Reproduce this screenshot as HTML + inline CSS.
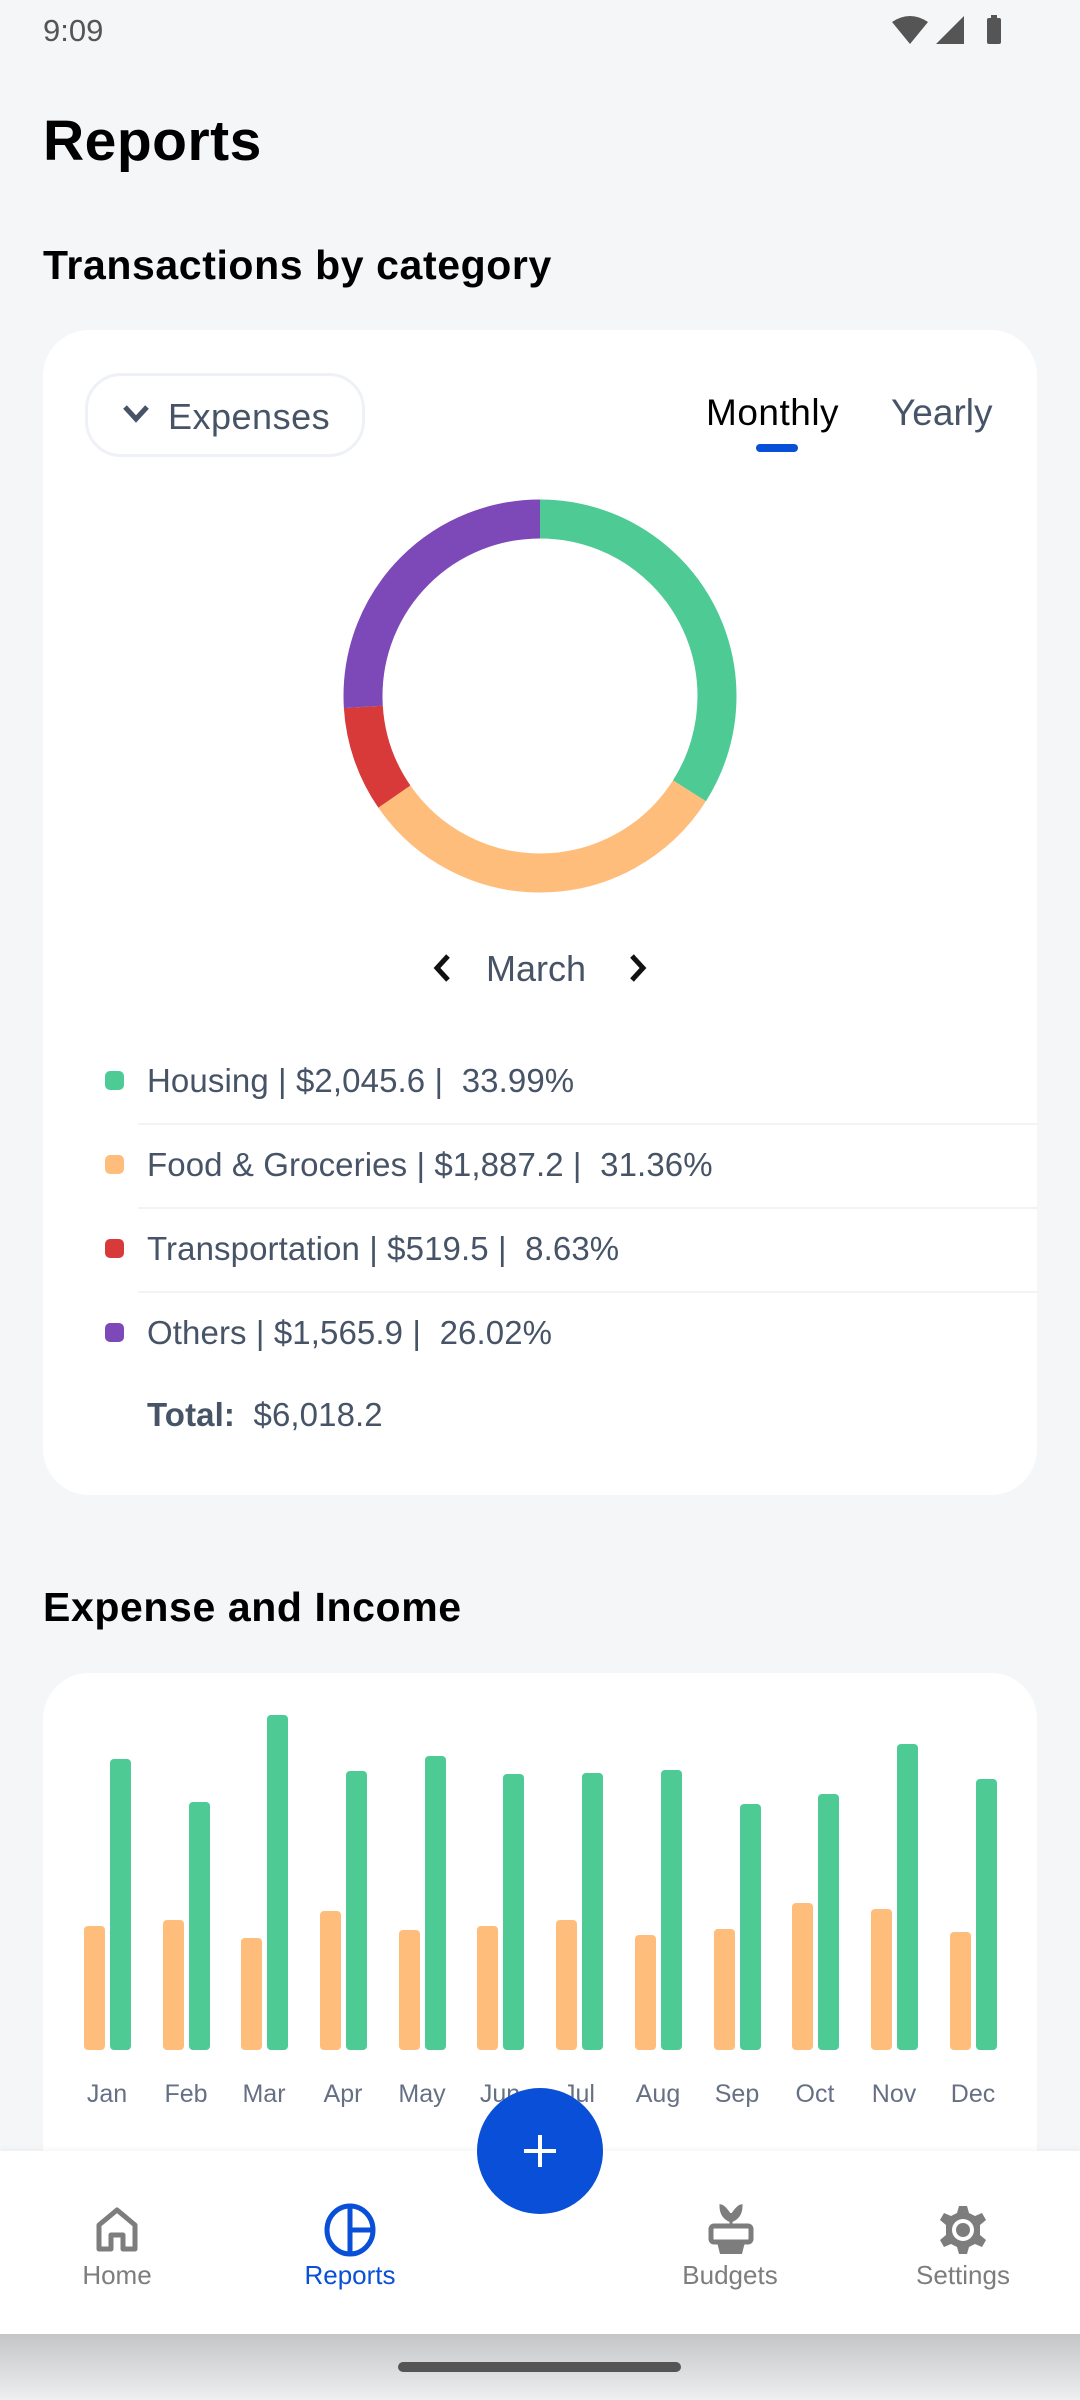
<!DOCTYPE html>
<html><head><meta charset="utf-8"><style>
*{margin:0;padding:0;box-sizing:border-box}
body{width:1080px;height:2400px;background:#f5f6f8;font-family:"Liberation Sans",sans-serif;position:relative;overflow:hidden;color:#475467}
.a{position:absolute}
.t{white-space:nowrap}
.leg{position:absolute;left:147px;font-size:33px;letter-spacing:0.1px;color:#475467;white-space:nowrap;line-height:40px}
.dot{position:absolute;left:105px;width:19px;height:19px;border-radius:5px}
.div{position:absolute;left:138px;right:43px;height:2px;background:#f1f3f6}
.nl{position:absolute;top:2260px;font-size:26px;color:#7d7d7d;width:160px;text-align:center}
.ml{position:absolute;top:2080px;font-size:25px;color:#667085;width:70px;text-align:center}
</style></head><body>
<div class="a t" style="left:43px;top:13px;font-size:31px;color:#555">9:09</div>
<svg class="a" style="left:888px;top:14px" width="124" height="34" viewBox="0 0 124 34">
<path d="M4 8 Q22 -4 40 8 L22 30 Z" fill="#555"/>
<path d="M48 30 L76 2 L76 30 Z" fill="#555"/>
<rect x="99" y="4" width="14" height="26" rx="2" fill="#555"/><rect x="103" y="1" width="6" height="4" fill="#555"/>
</svg>
<div class="a t" style="left:43px;top:108px;font-size:57px;font-weight:bold;color:#000;letter-spacing:0.5px">Reports</div>
<div class="a t" style="left:43px;top:242px;font-size:41px;font-weight:bold;color:#000;letter-spacing:0.6px">Transactions by category</div>

<div class="a" style="left:43px;top:330px;width:994px;height:1165px;background:#fff;border-radius:46px"></div>
<div class="a" style="left:85px;top:373px;width:280px;height:84px;border:3px solid #eef1f5;border-radius:36px"></div>
<svg class="a" style="left:120px;top:402px" width="32" height="24" viewBox="0 0 32 24"><path d="M5 5 L16 17 L27 5" fill="none" stroke="#475467" stroke-width="5"/></svg>
<div class="a t" style="left:168px;top:396px;font-size:36px;color:#475467;letter-spacing:0.5px">Expenses</div>
<div class="a t" style="left:706px;top:392px;font-size:37px;color:#000;letter-spacing:0.5px">Monthly</div>
<div class="a t" style="left:891px;top:392px;font-size:37px;color:#475467">Yearly</div>
<div class="a" style="left:756px;top:444px;width:42px;height:8px;border-radius:4px;background:#0a4fd8"></div>

<svg class="a" style="left:340px;top:496px" width="400" height="400" viewBox="0 0 400 400">
<g transform="rotate(-90 200 200)" fill="none" stroke-width="39">
<circle cx="200" cy="200" r="177" stroke="#4ecb94" stroke-dasharray="378 1112"/>
<circle cx="200" cy="200" r="177" stroke="#ffbd7b" stroke-dasharray="0 378 348.8 1112"/>
<circle cx="200" cy="200" r="177" stroke="#d83a3a" stroke-dasharray="0 726.8 96 1112"/>
<circle cx="200" cy="200" r="177" stroke="#7d48b8" stroke-dasharray="0 822.8 289.5 1112"/>
</g></svg>

<svg class="a" style="left:428px;top:950px" width="30" height="36" viewBox="0 0 30 36"><path d="M20 6 L9 18 L20 30" fill="none" stroke="#111" stroke-width="5"/></svg>
<div class="a t" style="left:486px;top:948px;font-size:36px;color:#475467">March</div>
<svg class="a" style="left:622px;top:950px" width="30" height="36" viewBox="0 0 30 36"><path d="M10 6 L21 18 L10 30" fill="none" stroke="#111" stroke-width="5"/></svg>

<div class="dot" style="top:1071px;background:#4ecb94"></div>
<div class="leg" style="top:1061px">Housing | $2,045.6 |&nbsp; 33.99%</div>
<div class="div" style="top:1123px"></div>
<div class="dot" style="top:1155px;background:#ffbd7b"></div>
<div class="leg" style="top:1145px">Food &amp; Groceries | $1,887.2 |&nbsp; 31.36%</div>
<div class="div" style="top:1207px"></div>
<div class="dot" style="top:1239px;background:#d83a3a"></div>
<div class="leg" style="top:1229px">Transportation | $519.5 |&nbsp; 8.63%</div>
<div class="div" style="top:1291px"></div>
<div class="dot" style="top:1323px;background:#7d48b8"></div>
<div class="leg" style="top:1313px">Others | $1,565.9 |&nbsp; 26.02%</div>
<div class="leg" style="top:1395px"><b>Total:</b>&nbsp; $6,018.2</div>

<div class="a t" style="left:43px;top:1584px;font-size:41px;font-weight:bold;color:#000;letter-spacing:0.6px">Expense and Income</div>
<div class="a" style="left:43px;top:1673px;width:994px;height:700px;background:#fff;border-radius:46px"></div>

<svg class="a" style="left:0;top:1700px" width="1080" height="360" viewBox="0 1700 1080 360">
<g fill="#ffbd7b">
<rect x="84" y="1926" width="21" height="124" rx="4"/>
<rect x="163" y="1920" width="21" height="130" rx="4"/>
<rect x="241" y="1938" width="21" height="112" rx="4"/>
<rect x="320" y="1911" width="21" height="139" rx="4"/>
<rect x="399" y="1930" width="21" height="120" rx="4"/>
<rect x="477" y="1926" width="21" height="124" rx="4"/>
<rect x="556" y="1920" width="21" height="130" rx="4"/>
<rect x="635" y="1935" width="21" height="115" rx="4"/>
<rect x="714" y="1929" width="21" height="121" rx="4"/>
<rect x="792" y="1903" width="21" height="147" rx="4"/>
<rect x="871" y="1909" width="21" height="141" rx="4"/>
<rect x="950" y="1932" width="21" height="118" rx="4"/>
</g>
<g fill="#4ecb94">
<rect x="110" y="1759" width="21" height="291" rx="4"/>
<rect x="189" y="1802" width="21" height="248" rx="4"/>
<rect x="267" y="1715" width="21" height="335" rx="4"/>
<rect x="346" y="1771" width="21" height="279" rx="4"/>
<rect x="425" y="1756" width="21" height="294" rx="4"/>
<rect x="503" y="1774" width="21" height="276" rx="4"/>
<rect x="582" y="1773" width="21" height="277" rx="4"/>
<rect x="661" y="1770" width="21" height="280" rx="4"/>
<rect x="740" y="1804" width="21" height="246" rx="4"/>
<rect x="818" y="1794" width="21" height="256" rx="4"/>
<rect x="897" y="1744" width="21" height="306" rx="4"/>
<rect x="976" y="1779" width="21" height="271" rx="4"/>
</g></svg>
<div class="ml" style="left:72px">Jan</div><div class="ml" style="left:151px">Feb</div><div class="ml" style="left:229px">Mar</div><div class="ml" style="left:308px">Apr</div><div class="ml" style="left:387px">May</div><div class="ml" style="left:465px">Jun</div><div class="ml" style="left:544px">Jul</div><div class="ml" style="left:623px">Aug</div><div class="ml" style="left:702px">Sep</div><div class="ml" style="left:780px">Oct</div><div class="ml" style="left:859px">Nov</div><div class="ml" style="left:938px">Dec</div>

<div class="a" style="left:0;top:2151px;width:1080px;height:183px;background:#fff;box-shadow:0 -2px 6px rgba(0,0,0,0.04)"></div>
<div class="a" style="left:0;top:2334px;width:1080px;height:66px;background:linear-gradient(#c4c5c7,#eeeff0)"></div>
<div class="a" style="left:398px;top:2362px;width:283px;height:10px;border-radius:5px;background:#555"></div>

<div class="a" style="left:477px;top:2088px;width:126px;height:126px;border-radius:50%;background:#0a4fd8"></div>
<svg class="a" style="left:520px;top:2131px" width="40" height="40" viewBox="0 0 40 40"><path d="M20 4 V36 M4 20 H36" stroke="#fff" stroke-width="4"/></svg>

<svg class="a" style="left:94px;top:2205px" width="46" height="50" viewBox="0 0 46 50"><path d="M5 44 V20 L23 5 L41 20 V44 H29 V30 H17 V44 Z" fill="none" stroke="#7d7d7d" stroke-width="5" stroke-linejoin="round"/></svg>
<div class="nl" style="left:37px">Home</div>
<svg class="a" style="left:324px;top:2203px" width="52" height="54" viewBox="0 0 52 54"><ellipse cx="26" cy="27" rx="23" ry="24" fill="none" stroke="#0a4fd8" stroke-width="5"/><path d="M26 3 V51 M26 27 H49" stroke="#0a4fd8" stroke-width="5"/></svg>
<div class="nl" style="left:270px;color:#0a4fd8">Reports</div>
<svg class="a" style="left:706px;top:2203px" width="50" height="54" viewBox="0 0 50 54"><path d="M25 22 V10 M25 14 Q19 4 15 3 Q15 14 25 18 M25 14 Q31 4 35 3 Q35 14 25 18" fill="#7d7d7d" stroke="#7d7d7d" stroke-width="3"/><rect x="5" y="23" width="40" height="16" rx="3" fill="none" stroke="#7d7d7d" stroke-width="5"/><path d="M11 39 L14 51 H36 L39 39" fill="#7d7d7d"/></svg>
<div class="nl" style="left:650px">Budgets</div>
<svg class="a" style="left:937px;top:2203px" width="52" height="54" viewBox="0 0 52 54"><path d="M22 3 H30 L32 10 L38 13 L45 10 L49 17 L43 22 V32 L49 37 L45 44 L38 41 L32 44 L30 51 H22 L20 44 L14 41 L7 44 L3 37 L9 32 V22 L3 17 L7 10 L14 13 L20 10 Z" fill="#7d7d7d"/><circle cx="26" cy="27" r="11" fill="#fff"/><circle cx="26" cy="27" r="7" fill="#7d7d7d"/></svg>
<div class="nl" style="left:883px">Settings</div>
</body></html>
